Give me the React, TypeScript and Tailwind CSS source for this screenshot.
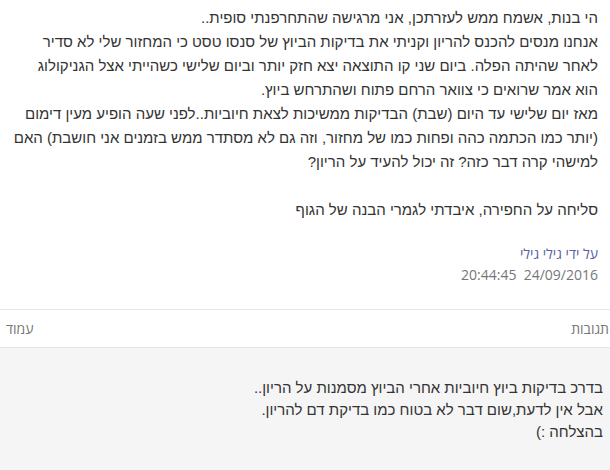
import React from "react";

const postLines = [
  "הי בנות, אשמח ממש לעזרתכן, אני מרגישה שהתחרפנתי סופית..",
  "אנחנו מנסים להכנס להריון וקניתי את בדיקות הביוץ של סנסו טסט כי המחזור שלי לא סדיר",
  "לאחר שהיתה הפלה. ביום שני קו התוצאה יצא חזק יותר וביום שלישי כשהייתי אצל הגניקולוג",
  "הוא אמר שרואים כי צוואר הרחם פתוח ושהתרחש ביוץ.",
  "מאז יום שלישי עד היום (שבת) הבדיקות ממשיכות לצאת חיוביות..לפני שעה הופיע מעין דימום",
  "(יותר כמו הכתמה כהה ופחות כמו של מחזור, וזה גם לא מסתדר ממש בזמנים אני חושבת) האם",
  "למישהי קרה דבר כזה? זה יכול להעיד על הריון?",
  "\u00a0",
  "סליחה על החפירה, איבדתי לגמרי הבנה של הגוף",
];

const replyLines = [
  "בדרכ בדיקות ביוץ חיוביות אחרי הביוץ מסמנות על הריון..",
  "אבל אין לדעת,שום דבר לא בטוח כמו בדיקת דם להריון.",
  "בהצלחה :)",
];

export default function App() {
  return (
    <div
      dir="rtl"
      className="w-[610px] h-[470px] overflow-hidden bg-white flex flex-col"
      style={{ fontFamily: '"Liberation Sans", Arial, sans-serif' }}
    >
      <div className="pt-[6px] pr-[12px] pl-3">
        <div className="text-[15px] leading-[24px] text-[#333333]">
          {postLines.map((l, i) => (
            <div key={i} className="whitespace-nowrap">
              {l}
            </div>
          ))}
        </div>
        <div
          className="mt-[21px] text-[14px] leading-[21px]"
          style={{ fontFamily: '"Open Sans", "Liberation Sans", sans-serif' }}
        >
          <div className="text-[#5b5ea6]">על ידי גילי גילי</div>
          <div className="text-[#777777] whitespace-pre" dir="ltr" style={{ textAlign: "right" }}>
            20:44:45  24/09/2016
          </div>
        </div>
      </div>
      <div
        className="mt-[24px] h-[39px] border-t border-b border-[#e6e6e6] flex items-center justify-between pl-[6px] pr-[1px] text-[14px] text-[#777777]"
        style={{ fontFamily: '"Open Sans", "Liberation Sans", sans-serif' }}
      >
        <span>תגובות</span>
        <span>עמוד</span>
      </div>
      <div className="flex-1 bg-[#f5f5f5] pt-[29px] pr-[7px] text-[15px] leading-[22px] text-[#333333]">
        {replyLines.map((l, i) => (
          <div key={i} className="whitespace-nowrap">
            {l}
          </div>
        ))}
      </div>
    </div>
  );
}
